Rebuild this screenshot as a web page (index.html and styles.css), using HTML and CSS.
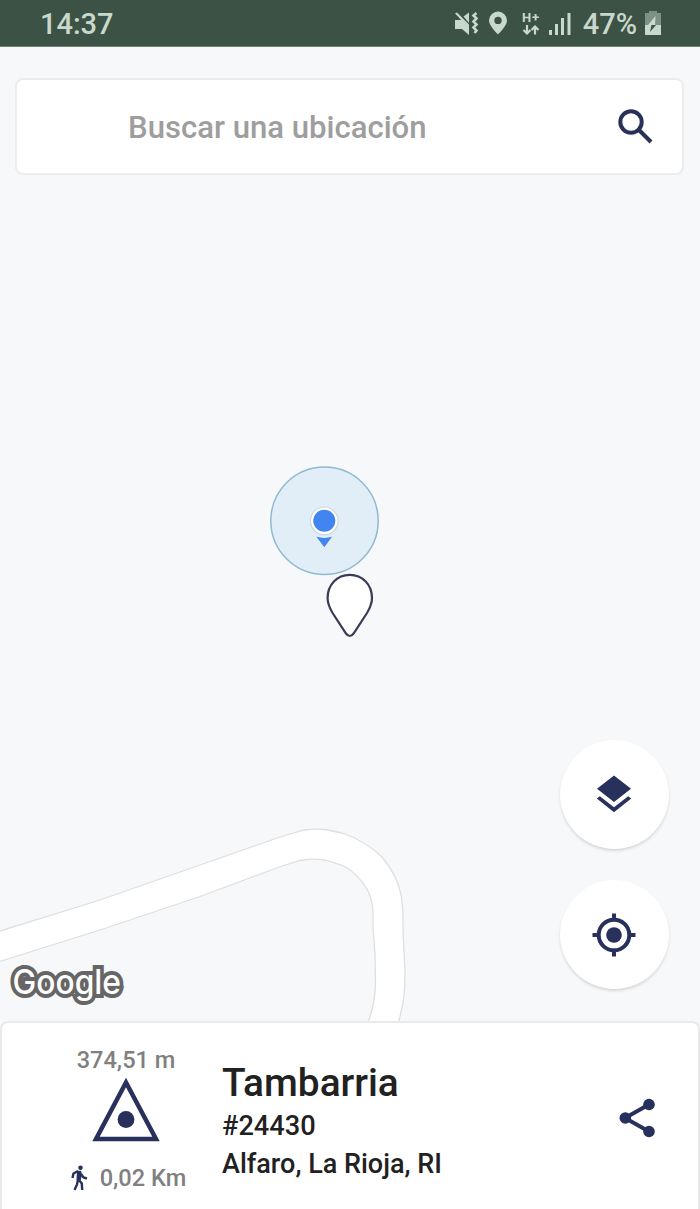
FILE: index.html
```html
<!DOCTYPE html>
<html lang="es">
<head>
<meta charset="utf-8">
<title>Tambarria</title>
<link rel="stylesheet" href="styles.css">
</head>
<body>
<div class="screen">
  <header class="status">
    <span class="clock">14:37</span>
    <div class="indicators">
      <svg class="ind-mute" width="26" height="26" viewBox="0 0 26 26">
        <path d="M9.500 5.500l5.500-4V12z"/>
        <path d="M2 2.500L15 15.500V24L8 18H1V9h6z"/>
        <path d="M1 2.500l2-1L15 13.500v3z"/>
        <path d="M22.500 2l-3 2.500 3 3-3 3 3 3-3 3 3 3-2 2.500" class="line wave"/>
      </svg>
      <svg class="ind-pin" width="20" height="24" viewBox="0 0 20 24">
        <path fill-rule="evenodd" d="M10 .5a9 9 0 0 0-9 9C1 15 10 23.500 10 23.500S19 15 19 9.500a9 9 0 0 0-9-9zm0 5.200a3.700 3.700 0 1 1 0 7.400 3.700 3.700 0 0 1 0-7.400z"/>
      </svg>
      <svg class="ind-net" width="18" height="26" viewBox="0 0 18 26">
        <text x="0" y="10.500" class="net-text" textLength="17">H+</text>
        <path class="line" d="M5 14v8M1.500 19L5 22.500 8.500 19M13 23.500v-8M9.500 19L13 15.500l3.500 3.500"/>
      </svg>
      <svg class="ind-signal" width="22" height="24" viewBox="0 0 22 24">
        <path d="M0 18h3v5H0zM6 12h3v11H6zM12 6h3v17h-3zM18.500 1h3v22h-3z"/>
      </svg>
      <span class="percent">47%</span>
      <svg class="ind-battery" width="16" height="24" viewBox="0 0 16 24">
        <path class="dim" d="M4 0h8v2h4v22H0V2h4z"/>
        <path d="M0 14h16v10H0z"/>
        <path d="M10.500 5L3 14h7z"/>
        <path class="bolt" d="M6.500 14H11L5 21z"/>
      </svg>
    </div>
  </header>

  <main class="map">
    <svg class="map-canvas" viewBox="0 47 700 974" width="700" height="974">
      <path class="road" d="M-5 932.500L100 900 200 865 280 837 304 830Q314 828.500 325 829.500L342 833Q364 840 382 857 398 876 401.500 897L403 913V930L405 972Q405 990 403 1003L397 1030H366L371 1013Q375 1000 375.500 985L375 955 373 928V912Q372 898 367 889 358 874 344 866L325 860Q312 858 300 860.500L282 866 200 896.500 100 930-5 963z"/>
      <circle class="accuracy" cx="324.500" cy="520.800" r="53.700"/>
      <circle class="dot-glow" cx="324.300" cy="521" r="14.500"/>
      <circle class="dot-ring" cx="324.300" cy="520.800" r="13.200"/>
      <circle class="dot" cx="324.300" cy="520.800" r="11"/>
      <path class="dot" d="M316.500 536.800q7.800 2.200 15.500 0l-7.700 10.500z"/>
      <path class="marker" d="M349.800 574.800C337 574.800 327.600 585 327.600 598c0 6 2 10 5 15l13.400 20.500q3.800 5 7.600 0L367 613c3-5 5-9 5-15 0-13-9.400-23.200-22.200-23.200z"/>
      <text class="brand" x="12.500" y="993.500" textLength="108.500" lengthAdjust="spacingAndGlyphs">Google</text>
    </svg>

    <div class="search">
      <span class="search-hint">Buscar una ubicación</span>
      <svg class="search-icon" width="36" height="36" viewBox="0 0 36 36">
        <circle cx="13" cy="13" r="10.700"/>
        <path d="M21 21L33 33"/>
      </svg>
    </div>

    <div class="actions">
      <button class="fab" aria-label="Capas">
        <svg class="layers" width="36" height="38" viewBox="0 0 36 38">
          <path d="M18 .5L35 13.800 18 27 1 13.800zM3.800 21.300L18 32.200l14.200-10.900 3 2.300L18 37.200.8 23.600z"/>
        </svg>
      </button>
      <button class="fab" aria-label="Mi ubicación">
        <svg width="44" height="44" viewBox="0 0 44 44">
          <circle cx="22" cy="22" r="7.800"/>
          <circle class="target" cx="22" cy="22" r="15.300"/>
          <path class="target" d="M22 .5V7M22 37v6.500M.5 22H7M37 22h6.500"/>
        </svg>
      </button>
    </div>
  </main>

  <section class="sheet">
    <div class="metrics">
      <span class="metric">374,51 m</span>
      <svg class="vertex" width="68" height="64" viewBox="0 0 68 64">
        <path d="M34 4.500L64 61H4z"/>
        <circle cx="34" cy="41.500" r="8.400"/>
      </svg>
      <div class="distance">
        <svg width="17" height="26" viewBox="0 0 17 26">
          <circle cx="9.500" cy="2.800" r="2.300"/>
          <path d="M7 6L2.500 8.500 1.500 13M8.500 7L7 15M10 9l2.500 3.500 3.500 1M7 14.500l-1 5L3.500 25M8 15l2.800 3.500.4 6.500"/>
          <path class="torso" d="M6 5.800h4l1 4-1.500 6-4-1z"/>
        </svg>
        <span class="metric">0,02 Km</span>
      </div>
    </div>
    <div class="info">
      <h1 class="name">Tambarria</h1>
      <p class="code">#24430</p>
      <p class="place">Alfaro, La Rioja, RI</p>
    </div>
    <svg class="share" width="38" height="40" viewBox="0 0 38 40">
      <path d="M31 6.500L7 20l24 13.500"/>
      <circle cx="31" cy="6.500" r="5.800"/>
      <circle cx="7.300" cy="20" r="5.800"/>
      <circle cx="31" cy="33.500" r="5.800"/>
    </svg>
  </section>
</div>
</body>
</html>
```
FILE: styles.css
```css
* { box-sizing: border-box; }

body {
  margin: 0;
  font-family: Roboto, "Liberation Sans", sans-serif;
  font-weight: 500;
}

.screen {
  display: flex;
  flex-direction: column;
  width: 700px;
  height: 1209px;
  background: #f7f8fa;
  overflow: hidden;
}

svg { display: block; flex: none; }

/* Status bar */
.status {
  display: flex;
  justify-content: space-between;
  align-items: center;
  height: 47px;
  padding: 0 39px 0 40px;
  background: #3c5244;
  border-bottom: 1px solid #718277;
  color: #c9d8cd;
  fill: #c9d8cd;
}
.clock { font-size: 29px; line-height: 46px; padding-top: 1px; }
.indicators { display: flex; align-items: center; }
.ind-mute { margin-top: 2px; }
.ind-pin { margin-left: 8px; }
.ind-net { margin-left: 14px; margin-top: 2px; }
.ind-signal { margin-left: 9px; margin-top: 2px; }
.percent { margin-left: 12px; font-size: 29px; line-height: 46px; padding-top: 1px; }
.ind-battery { margin-left: 8px; }
.line { fill: none; stroke: #c9d8cd; stroke-width: 2.200; }
.wave { stroke-width: 2.600; }
.dim { fill: #7d9184; }
.bolt { fill: #3c5244; }
.net-text { font-size: 13px; font-weight: 700; }

/* Map */
.map { position: relative; flex: 1; }
.map-canvas { position: absolute; inset: 0; }
.road { fill: #fff; stroke: #dedfe1; stroke-width: 1.300; }
.accuracy { fill: #e1eef8; stroke: #8fbad0; stroke-width: 1.500; }
.dot-glow { fill: #cfd8dc; }
.dot-ring { fill: #fff; }
.dot { fill: #4285f0; }
.marker { fill: #fff; stroke: #393b5b; stroke-width: 2.200; }
.brand {
  font-family: Inter, sans-serif;
  font-size: 33.500px;
  font-weight: 500;
  fill: #fff;
  stroke: #666;
  stroke-width: 8px;
  paint-order: stroke;
}

.search {
  position: relative;
  display: flex;
  align-items: center;
  justify-content: space-between;
  height: 97px;
  margin: 31px 16px 0 15px;
  padding: 0 28px 0 111px;
  background: #fff;
  border: 2px solid #ebecee;
  border-radius: 8px;
}
.search-hint { font-size: 31.100px; padding-top: 2px; color: #9e9e9e; }
.search-icon { fill: none; stroke: #2a3158; stroke-width: 4; }

.actions {
  position: absolute;
  right: 31px;
  bottom: 32px;
  display: flex;
  flex-direction: column;
  gap: 31px;
}
.fab {
  display: flex;
  align-items: center;
  justify-content: center;
  width: 109px;
  height: 109px;
  padding: 0 1px 0 0;
  border: 0;
  border-radius: 50%;
  background: #fff;
  box-shadow: 0 2px 3px rgba(0, 0, 0, .13);
  fill: #28305c;
}
.layers { margin-bottom: 2px; }
.target { fill: none; stroke: #28305c; stroke-width: 4; }

/* Detail sheet */
.sheet {
  display: flex;
  height: 188px;
  background: #fff;
  border: 2px solid #e9eaec;
  border-bottom: 0;
  border-radius: 8px 8px 0 0;
}
.metrics {
  display: flex;
  flex-direction: column;
  align-items: center;
  width: 220px;
  padding: 23px 0 0 28px;
}
.metric { font-size: 23.600px; line-height: 28px; color: #808080; font-weight: 500; }
.vertex { margin-top: 4px; fill: #28305c; }
.vertex path { fill: none; stroke: #28305c; stroke-width: 4.500; }
.distance { display: flex; align-items: center; gap: 12px; margin-top: 22px; padding-left: 5px; fill: #28305c; }
.distance path { fill: none; stroke: #28305c; stroke-width: 2.400; }
.distance .torso { fill: #28305c; stroke: none; }

.info { flex: 1; padding-top: 37px; color: #212121; }
.name, .code, .place { margin: 0; white-space: nowrap; }
.name { font-size: 38.800px; line-height: 46px; font-weight: 500; }
.code { font-size: 27.200px; line-height: 41px; }
.place { font-size: 27px; line-height: 35px; }
.share { margin: 75px 42px 0 0; fill: #28305c; }
.share path { fill: none; stroke: #28305c; stroke-width: 4; }
```
